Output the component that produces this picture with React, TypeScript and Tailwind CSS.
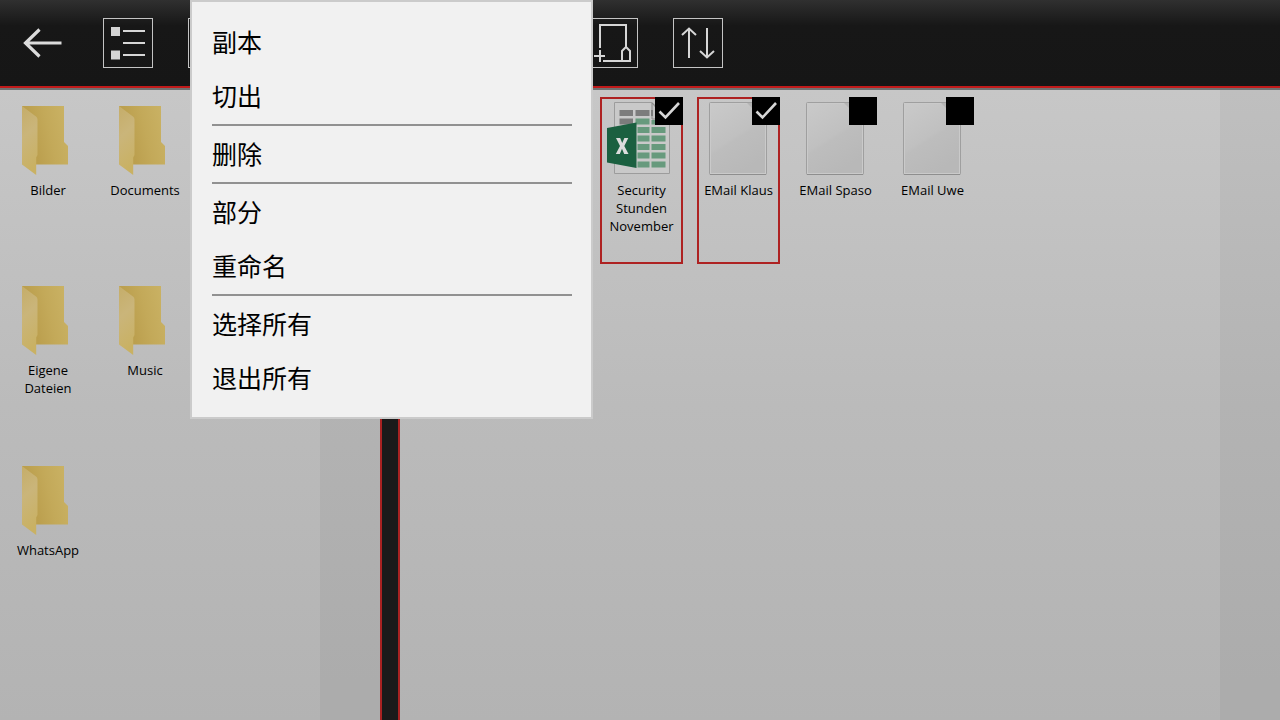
import type { ReactNode } from "react";

function FolderIcon() {
  return (
    <svg viewBox="6 0 84 84" className="h-[84px] w-full" aria-hidden="true">
      <defs>
        <linearGradient id="folderBack" x1="0" y1="0.7" x2="1" y2="0.4">
          <stop offset="0.25" stopColor="#bb9f4e" />
          <stop offset="0.6" stopColor="#c3a959" />
          <stop offset="1" stopColor="#c9b163" />
        </linearGradient>
        <linearGradient id="folderFlap" x1="0" y1="0" x2="0.2" y2="1">
          <stop offset="0" stopColor="#c5ad69" />
          <stop offset="0.45" stopColor="#cab57a" />
          <stop offset="1" stopColor="#c9b163" />
        </linearGradient>
      </defs>
      <path d="M22 9H64V45L68 49V67.5H34L22 12Z" fill="url(#folderBack)" />
      <path d="M22 9L36 19.5Q37.5 20.5 37.5 22.5V58L36.2 60.5V78L22 67.5Z" fill="url(#folderFlap)" />
    </svg>
  );
}

function PageIcon() {
  return (
    <svg viewBox="0 0 83 84" className="h-[84px] w-[83px] shrink-0" aria-hidden="true">
      <defs>
        <linearGradient id="paper" x1="0" y1="0" x2="0.5" y2="1">
          <stop offset="0" stopColor="#cacaca" />
          <stop offset="0.55" stopColor="#c0c0c0" />
          <stop offset="0.6" stopColor="#bdbdbd" />
          <stop offset="1" stopColor="#b8b8b8" />
        </linearGradient>
      </defs>
      <rect x="12.5" y="5.5" width="57" height="72" rx="1" fill="url(#paper)" stroke="#9f9f9f" />
      <rect x="13.5" y="6.5" width="55" height="70" fill="none" stroke="#cacaca" />
      <path d="M13 77.5H69" stroke="#8e8e8e" />
      <path d="M50 6L56 12V6Z" fill="#b4b4b4" />
    </svg>
  );
}

const greenRows = [30, 38.5, 47, 55.5, 64.5];

function SheetIcon() {
  return (
    <svg viewBox="0 0 83 84" className="h-[84px] w-[83px] shrink-0" aria-hidden="true">
      <path d="M14.5 5.5H52L69.5 22V76.5H14.5Z" fill="#c9c9c9" stroke="#9c9c9c" />
      <path d="M52 6V22H66Z" fill="#c4c4c4" stroke="#8a8a8a" />
      <path d="M19.500 13h13.500v6h-13.500zM35.500 13h14v6h-14zM51 13h2v6h-2zM19.500 21.500h13.500v6h-13.500z" fill="#7c7c7c" />
      <path d="M35.500 21.500h14v6h-14zM51.500 23h14v4.500h-14z" fill="#679a7d" />
      {greenRows.map((y) => (
        <path key={y} d={`M37.500 ${y}h12v6h-12zM51.500 ${y}h14v6h-14z`} fill="#679a7d" />
      ))}
      <path d="M7 31L36.500 25.500V71L7 65.500Z" fill="#1b6040" />
      <path d="M16 41h4.200l2 5 2.200-5h3.900l-4 7.900 4.200 8h-4.300l-2.200-5.200-2.200 5.200h-4l4.200-8z" fill="#dcdcdc" />
    </svg>
  );
}

function Folder({ name }: { name: string }) {
  return (
    <button type="button" className="flex h-[166px] w-[84px] flex-col items-center text-center leading-[18px]">
      <FolderIcon />
      <span>{name}</span>
    </button>
  );
}

function FileTile({ name, icon, selected = false, place = "" }: { name: string; icon: ReactNode; selected?: boolean; place?: string }) {
  return (
    <label
      className={`relative flex h-[167px] w-[83px] flex-col items-center border-2 text-center leading-[18px] ${selected ? "border-[#ae2222]" : "border-transparent"} ${place}`}
    >
      <span className="-mt-0.5 flex">{icon}</span>
      <span>{name}</span>
      <input type="checkbox" defaultChecked={selected} className="peer absolute -top-0.5 -right-0.5 size-7 appearance-none bg-black" />
      <svg viewBox="0 0 28 28" className="pointer-events-none absolute -top-0.5 -right-0.5 hidden size-7 peer-checked:block" aria-hidden="true">
        <path d="M4.500 14.500L10.500 20.500L24 6" fill="none" stroke="#d6d6d6" strokeWidth="2.600" />
      </svg>
    </label>
  );
}

function ToolButton({ label, children }: { label: string; children?: ReactNode }) {
  return (
    <button type="button" aria-label={label} className="size-[50px] shrink-0 border border-[#c4c4c4]">
      <svg viewBox="1 1 48 48" className="size-12" fill="none" stroke="#d6d6d6" strokeWidth="2" aria-hidden="true">
        {children}
      </svg>
    </button>
  );
}

const menuGroups = [["副本", "切出"], ["删除"], ["部分", "重命名"], ["选择所有", "退出所有"]];

function ContextMenu() {
  return (
    <div role="menu" className="absolute top-0 left-[190px] w-[403px] border-2 border-[#cbcbcb] bg-[#f1f1f1] pt-3 pr-[19px] pb-[11px] pl-5">
      {menuGroups.map((group, i) => (
        <div key={group[0]} className={i === menuGroups.length - 1 ? "pt-0.5" : "border-b-2 border-[#919191] pt-0.5"}>
          {group.map((item) => (
            <button
              key={item}
              type="button"
              role="menuitem"
              className="block h-[54px] w-full pb-1 text-left font-['Noto_Sans_CJK_SC',sans-serif] text-[25px] leading-[50px] font-normal text-black"
            >
              {item}
            </button>
          ))}
        </div>
      ))}
    </div>
  );
}

export default function App() {
  return (
    <div className="relative flex min-h-screen flex-col font-['Open_Sans','Noto_Sans_CJK_SC',sans-serif] text-[13px] text-black">
      <header className="h-[90px] border-b-2 border-[#6f7272] bg-[#c01a1a] pb-0.5">
        <div className="flex h-full items-center gap-[35px] bg-linear-to-b from-[#303030] via-[#171717] via-30% to-[#161616] pl-[18px]">
          <button type="button" aria-label="Back" className="h-[50px] w-[50px] shrink-0">
            <svg viewBox="0 0 50 50" className="size-full" fill="none" stroke="#dcdcdc" strokeWidth="3.200" aria-hidden="true">
              <path d="M43.500 25H7M21.500 11.500L7.500 25L21.500 38.500" />
            </svg>
          </button>
          <ToolButton label="List view">
            <path d="M8 9h9v9H8zM8 32.500h9v9H8z" fill="#d4d4d4" stroke="none" />
            <path d="M20 13h22M20 25h22M20 37h22" />
          </ToolButton>
          <ToolButton label="New folder" />
          <div className="ml-[315px] flex gap-[35px]">
            <ToolButton label="New file">
              <path d="M12 30V7H38V29M15 43H42V33L38 29L34 33V43M12 32V44M6 38H17" />
            </ToolButton>
            <ToolButton label="Sort">
              <path d="M16 40V11M9 17L16 10.500L23 17M34 10V39M27 33L34 39.500L41 33" />
            </ToolButton>
          </div>
        </div>
      </header>

      <main className="flex grow bg-linear-to-b from-[#c7c7c7] via-[#bbbbbb] via-50% to-[#b3b3b3]">
        <section className="flex w-[380px] shrink-0" aria-label="Folders">
          <div className="grid grow auto-rows-[167px] grid-cols-[84px_84px] content-start gap-[13px] pt-[7px] pl-1.5">
            <Folder name="Bilder" />
            <Folder name="Documents" />
            <Folder name="Eigene Dateien" />
            <Folder name="Music" />
            <Folder name="WhatsApp" />
          </div>
          <div className="w-[60px] bg-black/4" />
        </section>
        <div className="w-5 shrink-0 border-r-2 border-l-2 border-[#a82222] bg-[#1a1a1a]" />
        <section className="flex min-w-0 grow" aria-label="Files">
          <div className="grid grow auto-rows-[167px] grid-cols-[repeat(auto-fill,83px)] content-start gap-x-3.5 gap-y-[13px] pt-[7px] pl-1.5">
            <FileTile name="Security Stunden November" icon={<SheetIcon />} selected place="col-start-3" />
            <FileTile name="EMail Klaus" icon={<PageIcon />} selected />
            <FileTile name="EMail Spaso" icon={<PageIcon />} />
            <FileTile name="EMail Uwe" icon={<PageIcon />} />
          </div>
          <div className="w-[60px] bg-black/4" />
        </section>
      </main>

      <ContextMenu />
    </div>
  );
}
